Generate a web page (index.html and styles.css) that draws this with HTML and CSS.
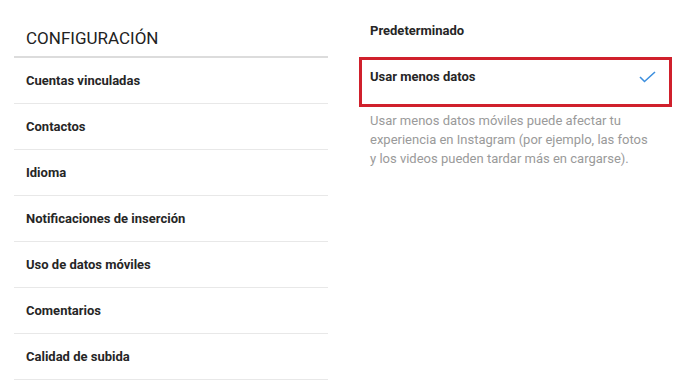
FILE: index.html
```html
<!DOCTYPE html>
<html lang="es">
  <head>
    <meta charset="UTF-8" />
    <meta name="viewport" content="width=device-width, initial-scale=1.0" />
    <title>Configuración</title>
    <link rel="stylesheet" href="styles.css">
  </head>
  <body>
    <div class="page">
      <div class="menu">
        <div class="menu-title">CONFIGURACIÓN</div>
        <div class="menu-item">Cuentas vinculadas</div>
        <div class="menu-item">Contactos</div>
        <div class="menu-item">Idioma</div>
        <div class="menu-item">Notificaciones de inserción</div>
        <div class="menu-item">Uso de datos móviles</div>
        <div class="menu-item">Comentarios</div>
        <div class="menu-item">Calidad de subida</div>
      </div>

      <div class="options">
        <div class="option">Predeterminado</div>
        <div class="option selected">
          <span>Usar menos datos</span>
          <svg class="check" width="17" height="12" viewBox="0 0 17 12">
            <polyline points="1,6 5.5,10.5 16,1" fill="none" stroke="#3d8fde" stroke-width="1.6" />
          </svg>
        </div>
        <p class="hint">
          Usar menos datos móviles puede afectar tu
          experiencia en Instagram (por ejemplo, las fotos
          y los videos pueden tardar más en cargarse).
        </p>
      </div>
    </div>
  </body>
</html>
```

FILE: styles.css
```css
body {
  margin: 0;
  background: #fff;
  font-family: Roboto, "Noto Sans", Arial, sans-serif;
  color: #262626;
}
.page {
  display: flex;
  gap: 31px;
  padding-left: 14px;
}
.menu {
  width: 314px;
}
.menu-title {
  font-size: 17px;
  line-height: 20px;
  padding: 28px 12px 8px;
  color: #222;
  border-bottom: 2px solid #dcdcdc;
}
.menu-item {
  height: 45px;
  line-height: 45px;
  padding-left: 12px;
  font-size: 13px;
  font-weight: bold;
  border-bottom: 1px solid #e8e8e8;
}
.options {
  width: 313px;
}
.option {
  font-size: 13px;
  font-weight: bold;
  line-height: 18px;
  padding: 22px 11px 0;
}
.option.selected {
  margin-top: 17px;
  display: flex;
  justify-content: space-between;
  align-items: center;
  border: 3px solid #d0202c;
  padding: 8px 13px 18px 8px;
}
.hint {
  margin: 4px 0 0;
  padding: 0 16px 0 11px;
  font-size: 13px;
  line-height: 19px;
  color: #9a9a9a;
}
```
